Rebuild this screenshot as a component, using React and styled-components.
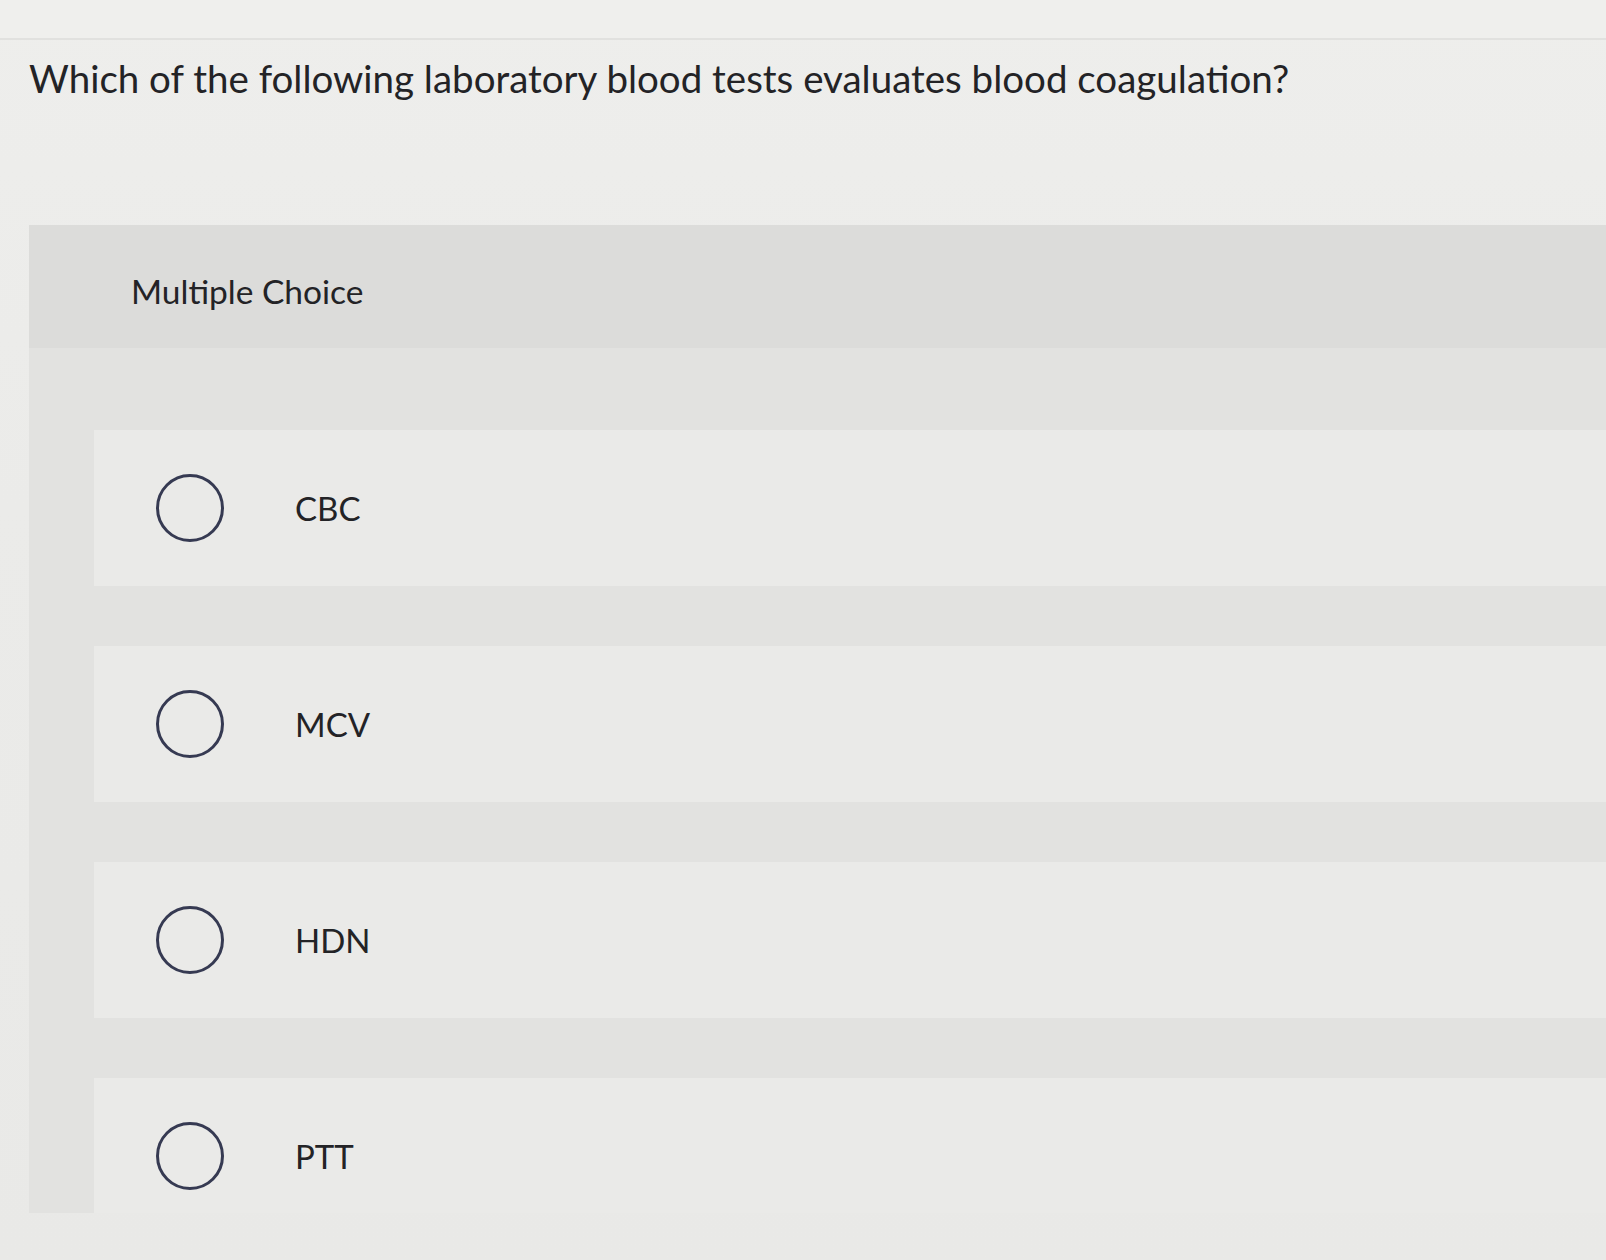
import styled, { createGlobalStyle } from "styled-components";

const GlobalStyle = createGlobalStyle`
  html, body {
    margin: 0;
    padding: 0;
    background: #ebebe9;
  }
  body {
    font-family: "Lato", "Open Sans", Arial, sans-serif;
    color: #232326;
  }
`;

const Page = styled.div`
  width: 1606px;
  height: 1260px;
  overflow: hidden;
  display: flex;
  flex-direction: column;
  background: linear-gradient(180deg, #eeeeec 0%, #ebebe9 40%, #e9e9e7 100%);
`;

const TopRule = styled.div`
  height: 38px;
  flex-shrink: 0;
  border-bottom: 2px solid #e1e1df;
  background: #efefed;
`;

const Question = styled.h1`
  margin: 0;
  padding: 16px 0 0 29px;
  height: 185px;
  flex-shrink: 0;
  box-sizing: border-box;
  font-size: 38.5px;
  font-weight: 400;
  line-height: 44px;
  color: #232326;
`;

const Panel = styled.section`
  margin-left: 29px;
  background: #e2e2e0;
  display: flex;
  flex-direction: column;
  height: 988px;
  flex-shrink: 0;
  overflow: hidden;
`;

const Header = styled.div`
  height: 123px;
  flex-shrink: 0;
  box-sizing: border-box;
  padding: 8px 0 0 102px;
  display: flex;
  align-items: center;
  font-size: 33.5px;
  background: #dcdcda;
  color: #232326;
`;

const Choices = styled.div`
  display: flex;
  flex-direction: column;
  gap: 60px;
  padding: 82px 0 0 65px;
`;

const Choice = styled.label`
  height: 156px;
  flex-shrink: 0;
  background: #eaeae8;
  display: flex;
  align-items: center;
  padding-left: 62px;
  cursor: pointer;
`;

const Radio = styled.span`
  width: 62px;
  height: 62px;
  border: 3px solid #363a52;
  border-radius: 50%;
  flex-shrink: 0;
`;

const Label = styled.span`
  margin-left: 71px;
  font-size: 33px;
  color: #232326;
`;

const options = ["CBC", "MCV", "HDN", "PTT"];

export default function App() {
  return (
    <Page>
      <GlobalStyle />
      <TopRule />
      <Question>
        Which of the following laboratory blood tests evaluates blood coagulation?
      </Question>
      <Panel>
        <Header>Multiple Choice</Header>
        <Choices>
          {options.map((o) => (
            <Choice key={o}>
              <Radio />
              <Label>{o}</Label>
            </Choice>
          ))}
        </Choices>
      </Panel>
    </Page>
  );
}
